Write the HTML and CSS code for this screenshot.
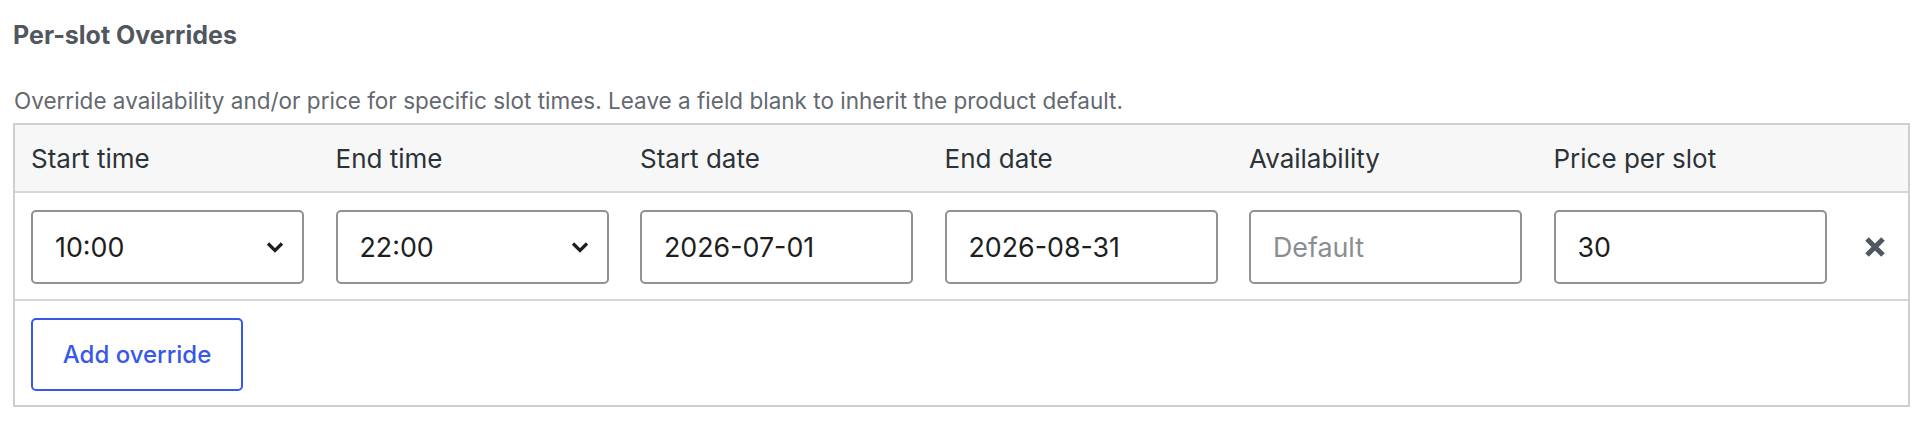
FILE: index.html
```html
<!DOCTYPE html>
<html lang="en">
<head>
    <meta charset="UTF-8">
    <title>Per-slot Overrides</title>
    <link rel="stylesheet" href="styles.css">
</head>
<body>
    <div id="wrap">
        <h3 class="panel_title">Per-slot Overrides</h3>
        <p class="panel_desc">Override availability and/or price for specific slot times. Leave a field blank to inherit the product default.</p>

        <div class="slot_table">
            <div class="slot_row head">
                <div>Start time</div>
                <div>End time</div>
                <div>Start date</div>
                <div>End date</div>
                <div>Availability</div>
                <div>Price per slot</div>
                <div></div>
            </div>
            <div class="slot_row body">
                <div class="field select">
                    <span>10:00</span>
                    <svg width="18" height="12" viewBox="0 0 18 12"><path d="M2 2.5l7 7 7-7" fill="none" stroke="#1e1e1e" stroke-width="3.2"/></svg>
                </div>
                <div class="field select">
                    <span>22:00</span>
                    <svg width="18" height="12" viewBox="0 0 18 12"><path d="M2 2.5l7 7 7-7" fill="none" stroke="#1e1e1e" stroke-width="3.2"/></svg>
                </div>
                <input class="field" type="text" value="2026-07-01">
                <input class="field" type="text" value="2026-08-31">
                <input class="field" type="text" placeholder="Default">
                <input class="field" type="text" value="30">
                <a class="remove" href="#" title="Remove">
                    <svg width="22" height="22" viewBox="0 0 22 22"><path d="M3 3l16 16M19 3L3 19" stroke="#50575e" stroke-width="5"/></svg>
                </a>
            </div>
            <div class="slot_foot">
                <button class="btn_add" type="button">Add override</button>
            </div>
        </div>
    </div>
</body>
</html>
```
FILE: styles.css
```css
/* 초기화 */
body {
    margin: 0;
    font-family: 'Inter', 'Liberation Sans', sans-serif;
    background: #ffffff;
}

#wrap {padding: 0 10px 0 13px;}

/* 제목 + 설명 */
.panel_title {
    margin: 20px 0 0 0;
    font-size: 25px;
    font-weight: 700;
    line-height: 30px;
    color: #50575e;
}
.panel_desc {
    margin: 36px 0 7px 1px;
    font-size: 22.5px;
    line-height: 30px;
    color: #646970;
}

/* 표 */
.slot_table {
    border: 2px solid #cdcfd2;
}
.slot_row {
    display: grid;
    grid-template-columns: repeat(6, 273px) 1fr;
    column-gap: 31.5px;
    align-items: center;
    padding-left: 16px;
    border-bottom: 2px solid #d5d7da;
}
.slot_row.head {
    height: 66px;
    background: #f7f7f7;
    font-size: 26px;
    color: #2c3338;
}
.slot_row.body {padding-top: 17px; padding-bottom: 15px;}

/* 입력칸 */
.field {
    box-sizing: border-box;
    width: 100%;
    height: 74px;
    margin: 0;
    padding: 0 22px;
    border: 2px solid #8f9296;
    border-radius: 5px;
    background: #ffffff;
    font-family: inherit;
    font-size: 26.8px;
    color: #1e1e1e;
    outline: none;
}
.field::placeholder {color: #8a8d91;}
.field.select {
    display: flex;
    align-items: center;
    justify-content: space-between;
    padding-right: 18px;
}

.remove {
    display: flex;
    margin-left: 6px;
    width: 22px;
}

/* 하단 버튼 */
.slot_foot {padding: 17px 16px 14px;}
.btn_add {
    display: block;
    width: 212px;
    height: 73px;
    border: 2px solid #3858e9;
    border-radius: 5px;
    background: #ffffff;
    font-family: inherit;
    font-size: 24px;
    font-weight: 500;
    color: #3858e9;
}
```
